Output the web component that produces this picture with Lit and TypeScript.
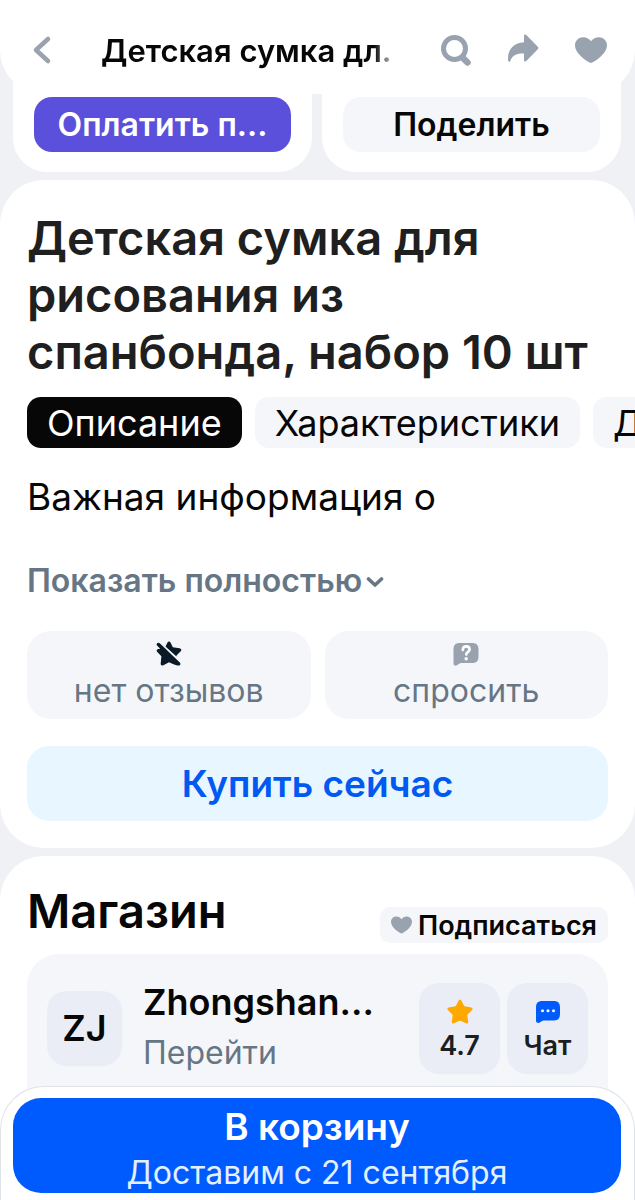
import { LitElement, html, css, svg } from "lit";
import { customElement } from "lit/decorators.js";

const heart = svg`<path d="M12 21.500C10.800 21.500 1 15.400 1 8.800 1 5.300 3.600 3 6.600 3 9 3 11 4.200 12 6c1-1.800 3-3 5.400-3C20.400 3 23 5.300 23 8.800c0 6.600-9.800 12.700-11 12.700z"/>`;

@customElement("app-root")
export class AppRoot extends LitElement {
  static styles = css`
    :host {
      display: flex;
      flex-direction: column;
      height: 100vh;
      overflow: hidden;
      background: #f0f1f5;
      color: #070707;
      font-family: Inter, "Noto Sans", sans-serif;
    }
    * { box-sizing: border-box; }
    h1, h2, p { margin: 0; }
    button {
      font: inherit;
      color: inherit;
      border: 0;
      padding: 0;
      margin: 0;
      background: none;
      white-space: nowrap;
      overflow: hidden;
      text-overflow: ellipsis;
    }
    a { color: inherit; text-decoration: none; }
    svg { display: block; flex: none; fill: currentColor; }

    .top {
      position: relative;
      z-index: 1;
      flex: none;
      display: flex;
      align-items: center;
      height: 94px;
      padding: 6px 28px 0 31px;
      background: #fff;
      border-radius: 0 0 44px 44px;
      color: #98a3af;
    }
    .top-title {
      flex: 1;
      min-width: 0;
      margin: 0 41px 0 48px;
      padding-top: 2px;
      color: #070707;
      font-size: 31px;
      line-height: 40px;
      font-weight: 600;
      white-space: nowrap;
      overflow: hidden;
      mask-image: linear-gradient(to right, #000 calc(100% - 24px), transparent);
    }
    .tools { display: flex; gap: 36px; }

    .scroll {
      flex: 1;
      min-height: 0;
      overflow: hidden;
      margin-top: -44px;
    }
    .offers {
      display: grid;
      grid-template-columns: 1fr 1fr;
      gap: 10px;
      padding: 0 14px 8px 13px;
    }
    .offer {
      display: grid;
      padding: 47px 21px 20px;
      background: #fff;
      border-radius: 0 0 34px 34px;
    }
    .offer button {
      height: 55px;
      padding: 0 18px;
      border-radius: 18px;
      background: #f5f6fa;
      font-size: 32px;
      font-weight: 600;
    }
    .offer .pay { background: #5b50dc; color: #fff; }

    .card {
      background: #fff;
      border-radius: 44px;
      padding: 29px 27px 27px;
      margin-bottom: 8px;
    }
    .name {
      color: #1f1f1f;
      font-size: 47px;
      line-height: 57px;
      font-weight: 600;
    }
    .tabs {
      display: flex;
      gap: 13px;
      margin: 17px -27px 0 0;
      overflow: hidden;
    }
    .tab {
      flex: none;
      height: 51px;
      padding: 2px 20px 0;
      border-radius: 14px;
      background: #f5f6fa;
      font-size: 36px;
      line-height: 49px;
    }
    .tab.active { background: #070707; color: #fff; }
    .lead {
      margin-top: 27px;
      font-size: 37px;
      line-height: 44px;
    }
    .more {
      display: flex;
      align-items: center;
      gap: 4px;
      margin-top: 40px;
      color: #667685;
      font-size: 32px;
      line-height: 44px;
      font-weight: 600;
    }
    .pair {
      display: grid;
      grid-template-columns: 1fr 1fr;
      gap: 14px;
      margin-top: 28px;
    }
    .tile {
      display: flex;
      flex-direction: column;
      align-items: center;
      gap: 3px;
      height: 88px;
      padding-top: 9px;
      border-radius: 24px;
      background: #f5f6fa;
      color: #667685;
      font-size: 32px;
      line-height: 40px;
    }
    .dark { color: #0a1a26; }
    .gray { color: #98a3af; }
    .buy {
      width: 100%;
      height: 75px;
      margin-top: 27px;
      border-radius: 22px;
      background: #e8f6ff;
      color: #0059f0;
      font-size: 37px;
      font-weight: 600;
    }

    .shop { padding-top: 26px; }
    .shop-head {
      display: flex;
      justify-content: space-between;
      align-items: flex-end;
    }
    .shop-title {
      padding-bottom: 4px;
      font-size: 47px;
      line-height: 57px;
      font-weight: 600;
    }
    .follow {
      display: flex;
      align-items: center;
      gap: 6px;
      height: 36px;
      padding: 0 11px 0 11px;
      border-radius: 10px;
      background: #f5f6fa;
      font-size: 27px;
      font-weight: 600;
    }
    .seller {
      display: flex;
      align-items: center;
      gap: 7px;
      margin-top: 11px;
      padding: 23px 20px 60px;
      border-radius: 32px;
      background: #f5f6fa;
    }
    .avatar {
      flex: none;
      display: grid;
      place-items: center;
      width: 75px;
      height: 75px;
      border-radius: 20px;
      background: #eaedf5;
      font-size: 36px;
      font-weight: 600;
    }
    .who {
      flex: 1;
      min-width: 0;
      padding: 0 30px 0 14px;
      white-space: nowrap;
    }
    .who-name {
      font-size: 36px;
      line-height: 50px;
      font-weight: 600;
    }
    .who-go {
      display: block;
      color: #667685;
      font-size: 32px;
      line-height: 52px;
    }
    .stat {
      flex: none;
      display: flex;
      flex-direction: column;
      align-items: center;
      gap: 3px;
      width: 81px;
      height: 91px;
      padding-top: 15px;
      border-radius: 20px;
      background: #eaedf5;
      color: #1b1e22;
      font-size: 27px;
      line-height: 34px;
      font-weight: 600;
    }
    .gold { color: #ffa800; }
    .blue { color: #005bff; }

    .bar {
      position: relative;
      z-index: 1;
      flex: none;
      display: grid;
      margin-top: -44px;
      padding: 11px 13px 7px 12px;
      border: 1px solid #dfe3ea;
      border-bottom: 0;
      border-radius: 44px 44px 0 0;
      background: #fff;
    }
    .cart {
      display: flex;
      flex-direction: column;
      align-items: center;
      height: 95px;
      padding-top: 5px;
      border-radius: 28px;
      background: #005bff;
      color: #fff;
    }
    .cart-main { font-size: 37px; line-height: 48px; font-weight: 600; }
    .cart-sub { font-size: 32px; line-height: 44px; color: #e4f0ff; }
  `;

  render() {
    return html`
      <header class="top">
        <button aria-label="Назад">
          <svg width="22" height="30" viewBox="0 0 22 30"><path d="M17 4 5 15l12 11" fill="none" stroke="currentColor" stroke-width="4.500" stroke-linecap="round" stroke-linejoin="round"/></svg>
        </button>
        <div class="top-title">Детская сумка дл.</div>
        <div class="tools">
          <button aria-label="Поиск">
            <svg width="32" height="32" viewBox="0 0 32 32"><g fill="none" stroke="currentColor"><circle cx="15.500" cy="14.500" r="11" stroke-width="5"/><path d="m24 24 4.500 4.500" stroke-width="6.500" stroke-linecap="round"/></g></svg>
          </button>
          <button aria-label="Поделиться">
            <svg width="32" height="32" viewBox="0 0 32 32"><path d="M17 2c0-1.500 1.300-1.900 2.300-1L30.800 12.800c.8.800.8 1.600 0 2.400L19.300 27c-1 .9-2.300.5-2.300-1v-6.500C10 19 5.500 21 3.200 27c-.5 1.200-1.700 1.200-2-.2C0 17 5.500 8.700 17 8.200z"/></svg>
          </button>
          <button aria-label="В избранное">
            <svg width="32" height="32" viewBox="1 .7 22 23" preserveAspectRatio="none">${heart}</svg>
          </button>
        </div>
      </header>

      <main class="scroll">
        <section class="offers">
          <div class="offer"><button class="pay">Оплатить п...</button></div>
          <div class="offer"><button>Поделить</button></div>
        </section>

        <section class="card">
          <h1 class="name">Детская сумка для рисования из спанбонда, набор 10 шт</h1>
          <nav class="tabs">
            <button class="tab active">Описание</button>
            <button class="tab">Характеристики</button>
            <button class="tab">Д</button>
          </nav>
          <p class="lead">Важная информация о</p>
          <button class="more">
            Показать полностью
            <svg width="18" height="14" viewBox="0 0 18 14"><path d="m2.500 5 6.500 6 6.500-6" fill="none" stroke="currentColor" stroke-width="3.600" stroke-linecap="round" stroke-linejoin="round"/></svg>
          </button>
          <div class="pair">
            <button class="tile">
              <svg class="dark" width="28" height="28" viewBox="0 0 28 28"><path d="M10.500 6.500 12.500 2.500c.7-1.300 2.300-1.300 3 0l2.300 4.800 6.700.9c1.900.3 2.400 1.900 1.200 3.100L21.500 15.500l-.1 1.100zM2.200 3.300c1-1 2-.6 2.800.2L24.800 22.600c1.200 1.300.6 3-.8 3-1.500 0-3.800-.6-5.500-1.300L14 22.300l-5.600 2.900c-1.700.8-3-.2-2.700-1.900L6.400 16.300 2.300 12c-1.200-1.300-.6-2.700.9-3l2-.3L2.300 5.800c-.8-.8-.9-1.700-.1-2.500z"/></svg>
              <span>нет отзывов</span>
            </button>
            <button class="tile">
              <svg class="gray" width="28" height="28" viewBox="0 0 28 28"><path d="M8 3h12c4.500 0 6.500 2 6.500 6.500v7c0 4.500-2 6.500-6.500 6.500h-11c-1.700 0-3.500 2.700-5.300 2.700-1.300 0-2.200-.8-2.200-2.200v-14C1.500 5 3.500 3 8 3z"/><path d="M10.800 10c0-2.200 1.300-3.600 3.400-3.600 2 0 3.400 1.200 3.400 3 0 2.500-3.300 2.500-3.300 5" fill="none" stroke="#fff" stroke-width="2.600" stroke-linecap="round"/><circle cx="14.200" cy="18.700" r="1.700" fill="#fff"/></svg>
              <span>спросить</span>
            </button>
          </div>
          <button class="buy">Купить сейчас</button>
        </section>

        <section class="card shop">
          <div class="shop-head">
            <h2 class="shop-title">Магазин</h2>
            <button class="follow">
              <svg class="gray" width="21" height="18" viewBox="1 2.500 22 19.500" preserveAspectRatio="none">${heart}</svg>
              Подписаться
            </button>
          </div>
          <div class="seller">
            <div class="avatar">ZJ</div>
            <div class="who">
              <div class="who-name">Zhongshan...</div>
              <a class="who-go" href="#shop">Перейти</a>
            </div>
            <button class="stat">
              <svg class="gold" width="28" height="28" viewBox="0 0 28 28"><path d="M14 3.200 17.300 9.600 25 10.900 19.700 16.500 20.700 24 14 20.900 7.300 24l1-7.500L3 10.900l7.700-1.300z" stroke="currentColor" stroke-width="3" stroke-linejoin="round"/></svg>
              <span>4.7</span>
            </button>
            <button class="stat">
              <svg class="blue" width="28" height="28" viewBox="0 0 28 28"><path d="M8.500 3h11c4.500 0 6.500 2 6.500 6.500V16c0 4.500-2 6.500-6.500 6.500H9.500c-1.800 0-3.300 2.500-5 2.500-1.300 0-2.500-.8-2.500-2.200V9.500C2 5 4 3 8.500 3z"/><g fill="#fff"><circle cx="8.500" cy="12.800" r="1.500"/><circle cx="14" cy="12.800" r="1.500"/><circle cx="19.500" cy="12.800" r="1.500"/></g></svg>
              <span>Чат</span>
            </button>
          </div>
        </section>
      </main>

      <footer class="bar">
        <button class="cart">
          <span class="cart-main">В корзину</span>
          <span class="cart-sub">Доставим с 21 сентября</span>
        </button>
      </footer>
    `;
  }
}
